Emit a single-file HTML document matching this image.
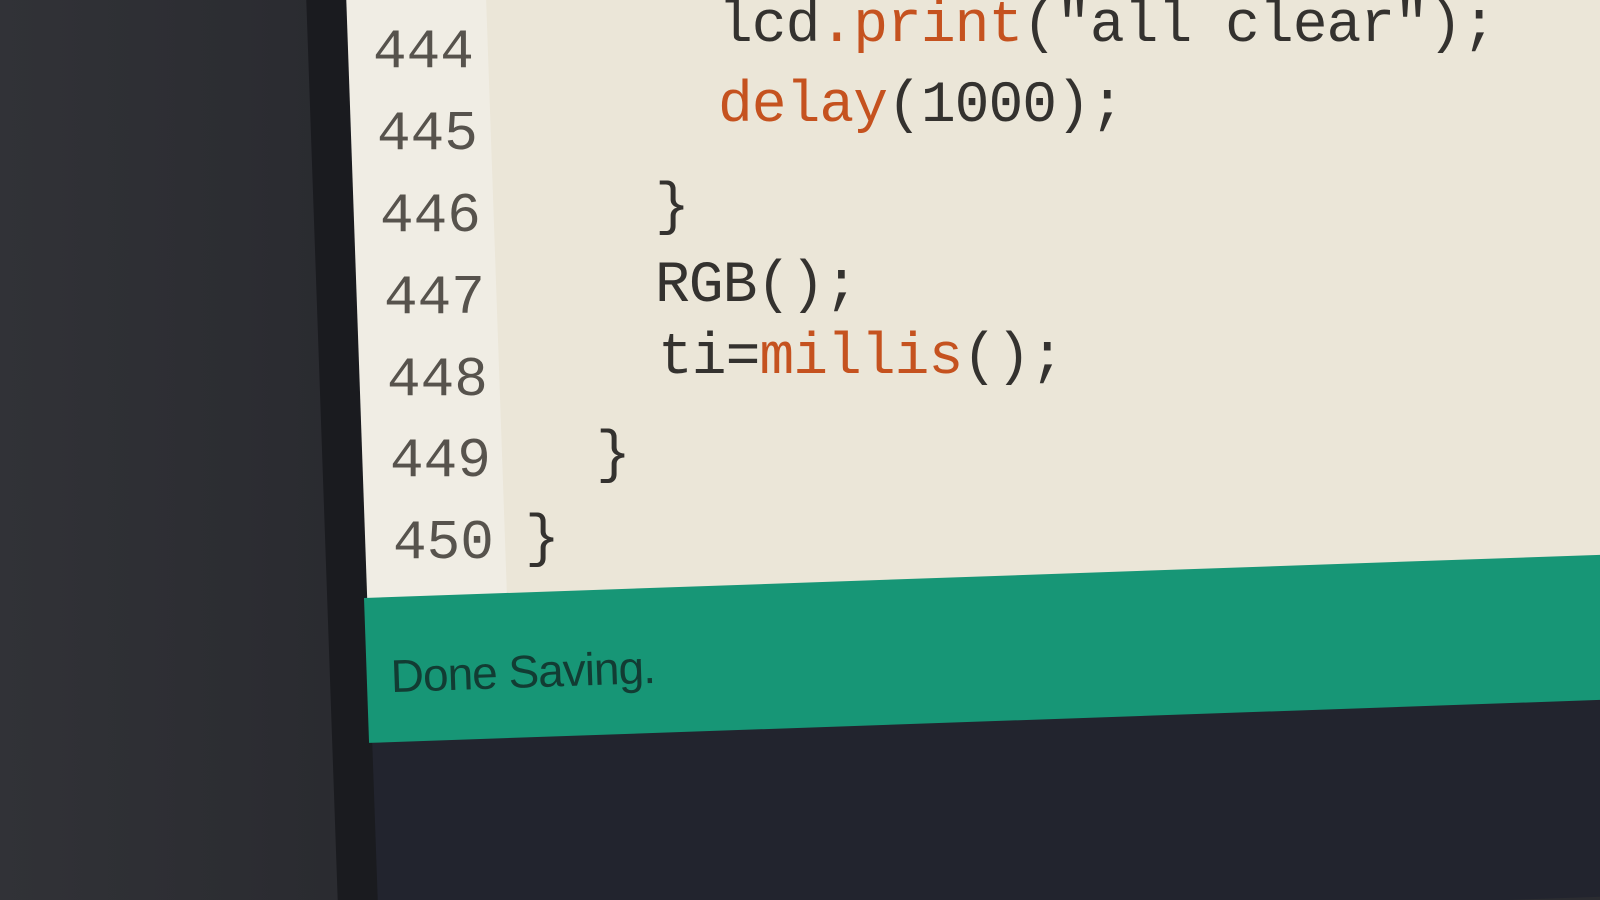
<!DOCTYPE html>
<html><head><meta charset="utf-8"><style>
html,body{margin:0;padding:0;width:1600px;height:900px;overflow:hidden;overflow:clip;background:#2b2c31;font-family:"Liberation Mono",monospace;}
#wrap{position:fixed;left:0;top:0;width:1600px;height:900px;overflow:hidden;overflow:clip;}
.left{position:absolute;left:0;top:0;width:330px;height:900px;background:linear-gradient(90deg,#313237,#2a2b30);}
.bezel{position:absolute;left:322px;top:0;width:40px;height:900px;background:#1a1b1f;transform:skewX(2deg);}
.screen{position:absolute;left:352px;top:-20px;width:1300px;height:620px;background:#ebe6d8;transform:rotate(-2deg);transform-origin:0 100%;}
.gutter{position:absolute;left:0;top:0;width:155px;height:100%;background:#f0ede4;}
.green{position:absolute;left:364px;top:598px;width:1300px;height:145px;background:#179676;transform:rotate(-2deg);transform-origin:0 0;}
.green span{position:absolute;left:24px;top:52px;font-family:"Liberation Sans",sans-serif;font-size:46px;color:#123c33;letter-spacing:-1px;}
.navy{position:absolute;left:357px;top:700px;width:1300px;height:240px;background:#22242e;transform:rotate(-2deg);transform-origin:0 0;}
.ln{position:absolute;font-size:56px;color:#57534d;line-height:1;}
.c{position:absolute;font-size:58px;color:#34322f;line-height:1;letter-spacing:-1px;}
.o{color:#c5521f;}
</style></head><body><div id="wrap">
<div class="left"></div>
<div class="navy"></div>
<div class="screen"><div class="gutter"></div></div>
<div class="bezel"></div>
<div class="green"><span>Done Saving.</span></div>
<div class="ln" style="left:373px;top:24px">444</div>
<div class="ln" style="left:377px;top:106px">445</div>
<div class="ln" style="left:380px;top:188px">446</div>
<div class="ln" style="left:384px;top:270px">447</div>
<div class="ln" style="left:387px;top:352px">448</div>
<div class="ln" style="left:390px;top:433px">449</div>
<div class="ln" style="left:393px;top:515px">450</div>
<div class="c" style="left:718px;top:-2px">lcd<span class="o">.print</span>("all clear");</div>
<div class="c" style="left:718px;top:78px"><span class="o">delay</span>(1000);</div>
<div class="c" style="left:655px;top:180px">}</div>
<div class="c" style="left:655px;top:258px">RGB();</div>
<div class="c" style="left:658px;top:330px">ti=<span class="o">millis</span>();</div>
<div class="c" style="left:596px;top:428px">}</div>
<div class="c" style="left:525px;top:512px">}</div>
</div></body></html>
